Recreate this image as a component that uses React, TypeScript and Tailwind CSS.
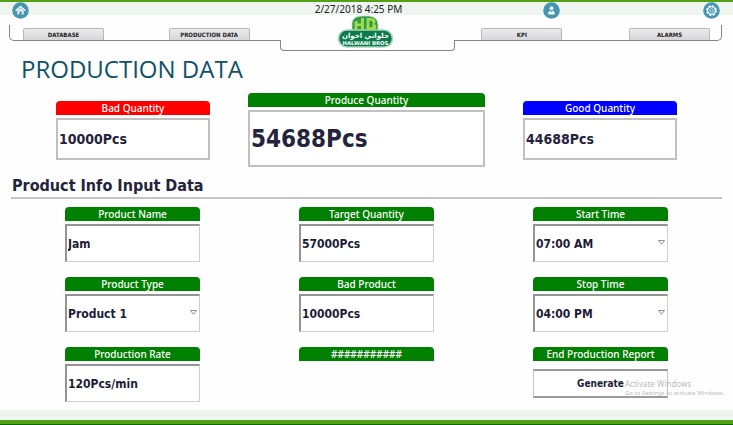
import type { ReactNode } from 'react';

const SUMMARY = [
  { id: 'bad-quantity', label: 'Bad Quantity', value: '10000Pcs', color: 'bg-[#fe0000]', large: false },
  { id: 'produce-quantity', label: 'Produce Quantity', value: '54688Pcs', color: 'bg-[#008000]', large: true },
  { id: 'good-quantity', label: 'Good Quantity', value: '44688Pcs', color: 'bg-[#0000fe]', large: false },
];

const FIELD =
  'block w-full h-[38px] pl-px rounded-none border-t-2 border-l-2 border-r border-b border-t-[#949494] border-l-[#949494] border-r-[#cfcfcf] border-b-[#cfcfcf] bg-white text-xs font-bold text-[#1c1c38] outline-none';

function HomeIcon() {
  return (
    <svg viewBox="0 0 17 17" className="w-[17px] h-[17px]">
      <circle cx="8.5" cy="8.5" r="8.3" fill="#4796b0" />
      <path d="M4.2 9 V8.2 L8.5 4.4 L12.8 8.2 V9" fill="none" stroke="#fff" strokeWidth="1.3" strokeLinejoin="round" />
      <path d="M5.3 8.6 L8.5 5.9 L11.7 8.6 V12.6 H9.7 V9.6 H7.3 V12.6 H5.3 Z" fill="#e4f2f6" />
    </svg>
  );
}

function UserIcon() {
  return (
    <svg viewBox="0 0 17 17" className="w-[17px] h-[17px]">
      <circle cx="8.5" cy="8.5" r="8.3" fill="#4796b0" />
      <circle cx="8.5" cy="6.3" r="2" fill="#e4f2f6" />
      <path d="M5.2 12.4 C5.2 10 6.2 9 7.3 8.8 L8.5 10.3 L9.7 8.8 C10.8 9 11.8 10 11.8 12.4 Z" fill="#fff" />
    </svg>
  );
}

function GearIcon() {
  return (
    <svg viewBox="0 0 17 17" className="w-[17px] h-[17px]">
      <circle cx="8.5" cy="8.5" r="8.3" fill="#4796b0" />
      <circle cx="8.5" cy="8.5" r="4.6" fill="none" stroke="#fff" strokeWidth="1.6" strokeDasharray="2.1 1.51" />
      <circle cx="8.5" cy="8.5" r="3.8" fill="none" stroke="#fff" strokeWidth="1.1" />
      <circle cx="8.5" cy="8.5" r="1.7" fill="none" stroke="#cfe6ee" strokeWidth="1" />
    </svg>
  );
}

function Logo() {
  return (
    <svg viewBox="0 0 57 34" className="w-[57px] h-[34px]" role="img" aria-label="Halwani Bros">
      <path d="M15 16 V8 Q16 1 25 1 H32 Q41 2 41 10 V16 Z" fill="#2f9a4a" stroke="#bfe0c8" strokeWidth="0.8" />
      <rect x="1.5" y="15" width="54" height="17" rx="8.5" fill="#0b7a4b" stroke="#a9d5bd" strokeWidth="1.6" />
      <path d="M17.5 15 V7 L20.5 5.2 V8.6 H24 V3 H27 V15 H24 V11 H20.5 V15 Z" fill="#a3d94c" />
      <path
        d="M29.5 3 H35 Q38.6 4 38.6 7.2 L37.6 8.8 Q39.4 10 39.4 12 Q39 15 36 15 H29.5 Z M32.4 5.8 V12.2 H35 Q36.8 9 35 5.8 Z"
        fill="#a3d94c"
        fillRule="evenodd"
      />
      <text x="28.5" y="22.5" textAnchor="middle" direction="rtl" fontFamily="DejaVu Sans, sans-serif" fontSize="7" fontWeight="bold" fill="#fff">
        حلواني اخوان
      </text>
      <text x="28.5" y="29.5" textAnchor="middle" fontFamily="DejaVu Sans, sans-serif" fontSize="5.3" fontWeight="bold" fill="#fff">
        HALWANI BROS
      </text>
    </svg>
  );
}

function Tab({ children }: { children: ReactNode }) {
  return (
    <button
      type="button"
      className="w-[81px] h-3 rounded-t-[2px] border border-b-0 border-[#b9b9bd] bg-gradient-to-b from-[#ececee] to-[#d6d6da] text-[6px] leading-[12px] font-bold text-[#222]"
    >
      {children}
    </button>
  );
}

function Caption({ id, color = 'bg-[#008000]', children }: { id?: string; color?: string; children: ReactNode }) {
  return (
    <label
      htmlFor={id}
      className={`block h-[14px] rounded-t-[4px] text-center font-['Noto_Sans',sans-serif] text-[10px] leading-[14px] font-medium text-white ${color}`}
    >
      {children}
    </label>
  );
}

function TextField({ id, label, value }: { id: string; label: string; value: string }) {
  return (
    <div className="flex flex-col gap-[3px]">
      <Caption id={id}>{label}</Caption>
      <input id={id} type="text" defaultValue={value} className={FIELD} />
    </div>
  );
}

function SelectField({ id, label, options }: { id: string; label: string; options: string[] }) {
  return (
    <div className="flex flex-col gap-[3px]">
      <Caption id={id}>{label}</Caption>
      <div className="relative">
        <select id={id} className={`${FIELD} appearance-none`}>
          {options.map((option) => (
            <option key={option}>{option}</option>
          ))}
        </select>
        <svg viewBox="0 0 7 5" className="pointer-events-none absolute right-[3px] top-4 w-[7px] h-[5px]">
          <path d="M0.5 0.5 H6.5 L3.5 4.3 Z" fill="#fff" stroke="#777" strokeWidth="0.8" />
        </svg>
      </div>
    </div>
  );
}

export default function App() {
  return (
    <div className="relative min-h-screen flex flex-col bg-[#fefefe] font-['DejaVu_Sans_Condensed','Noto_Sans',sans-serif]">
      <header>
        <div className="h-[15px] flex items-start justify-between border-t-2 border-[#559f16] bg-[#eef5ef] pl-3 pr-[13px]">
          <button type="button" aria-label="Home">
            <HomeIcon />
          </button>
          <button type="button" aria-label="Settings">
            <GearIcon />
          </button>
        </div>
        <button type="button" aria-label="User" className="absolute left-3/4 top-[2px] -ml-[7px]">
          <UserIcon />
        </button>
        <time className="absolute inset-x-0 top-[2px] pr-4 text-center font-['Noto_Sans',sans-serif] text-[10px] leading-[14px] text-[#222] pointer-events-none">
          2/27/2018 4:25 PM
        </time>

        <nav className="ml-[9px] mr-[11px] grid grid-cols-[271fr_176fr_267fr]">
          <div className="mt-[10px] h-4 flex items-end justify-between rounded-bl-[5px] border-b border-l border-[#858585] pl-[13px] pr-[30px]">
            <Tab>DATABASE</Tab>
            <Tab>PRODUCTION DATA</Tab>
          </div>
          <div className="h-9 flex flex-col items-center">
            <div className="relative z-10 -mb-[25px] pr-[3px]">
              <Logo />
            </div>
            <div className="mt-4 w-full h-[11px] rounded-b-[4px] border border-t-0 border-[#858585]" />
          </div>
          <div className="mt-[10px] h-4 flex items-end justify-between rounded-br-[5px] border-b border-r border-[#858585] pl-[26px] pr-[11px]">
            <Tab>KPI</Tab>
            <Tab>ALARMS</Tab>
          </div>
        </nav>
      </header>

      <main>
        <h1 className="px-[21px] pt-[2px] font-['Open_Sans','Noto_Sans',sans-serif] text-2xl leading-[32px] font-normal text-[#0f5169]">
          PRODUCTION DATA
        </h1>

        <section className="mt-2 px-14 grid grid-cols-[154fr_237fr_154fr] items-center gap-x-[38px]">
          {SUMMARY.map((item) => (
            <div key={item.id} className="flex flex-col gap-[3px]">
              <Caption id={item.id} color={item.color}>
                {item.label}
              </Caption>
              <input
                id={item.id}
                readOnly
                value={item.value}
                className={`block w-full rounded-none border-2 border-[#c0c0c0] bg-white font-bold text-[#24243c] outline-none ${
                  item.large ? 'h-[57px] pl-px text-2xl' : 'h-[42px] pl-px text-sm'
                }`}
              />
            </div>
          ))}
        </section>

        <h2 className="mt-2 mx-[11px] pl-px border-b-2 border-[#c4c4c4] text-base leading-[22px] font-bold text-[#24243c]">
          Product Info Input Data
        </h2>

        <form className="mt-2 px-[65px] grid grid-cols-3 gap-x-[99px] gap-y-[15px]">
          <TextField id="product-name" label="Product Name" value="Jam" />
          <TextField id="target-quantity" label="Target Quantity" value="57000Pcs" />
          <SelectField id="start-time" label="Start Time" options={['07:00 AM', '08:00 AM']} />

          <SelectField id="product-type" label="Product Type" options={['Product 1', 'Product 2']} />
          <TextField id="bad-product" label="Bad Product" value="10000Pcs" />
          <SelectField id="stop-time" label="Stop Time" options={['04:00 PM', '05:00 PM']} />

          <TextField id="production-rate" label="Production Rate" value="120Pcs/min" />
          <Caption>###########</Caption>
          <div className="flex flex-col gap-2">
            <Caption id="generate">End Production Report</Caption>
            <button
              id="generate"
              type="button"
              className="h-[29px] border-x border-y-2 border-x-[#c4c4c4] border-y-[#9a9a9a] bg-white text-[10px] font-bold text-[#1c1c38]"
            >
              Generate
            </button>
          </div>
        </form>
      </main>

      <footer className="mt-auto h-[15px] border-b border-[#0a6a0a] bg-[#eef5ef] flex items-end">
        <div className="w-full h-1 bg-[#559f16]" />
      </footer>

      <div className="pointer-events-none absolute right-3 bottom-[28px] w-24 font-['Noto_Sans',sans-serif] text-[#a9a9a9]/80">
        <p className="text-[8px] leading-[10px]">Activate Windows</p>
        <p className="text-[6px] leading-[8px] whitespace-nowrap">Go to Settings to activate Windows.</p>
      </div>
    </div>
  );
}
